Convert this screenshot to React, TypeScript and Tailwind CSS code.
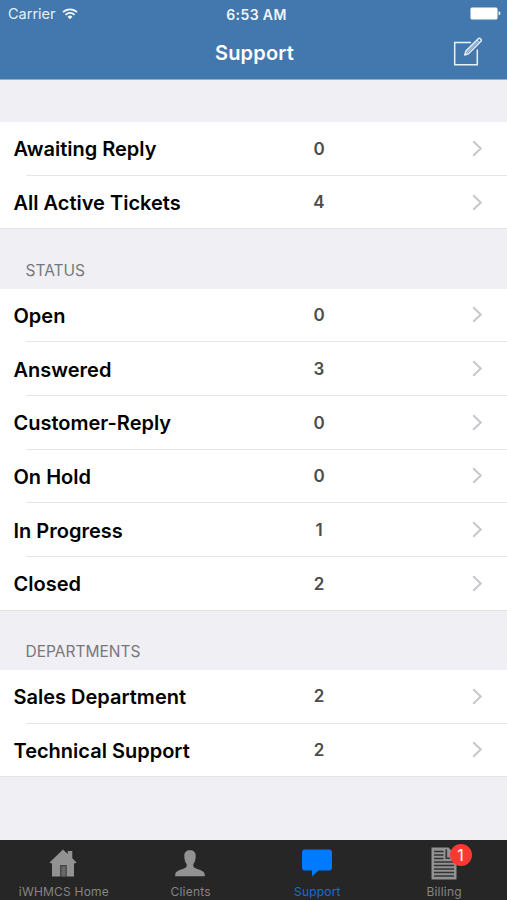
import React from 'react';

interface Row {
  label: string;
  count: number;
}

interface Section {
  title?: string;
  rows: Row[];
}

const sections: Section[] = [
  {
    rows: [
      { label: 'Awaiting Reply', count: 0 },
      { label: 'All Active Tickets', count: 4 },
    ],
  },
  {
    title: 'STATUS',
    rows: [
      { label: 'Open', count: 0 },
      { label: 'Answered', count: 3 },
      { label: 'Customer-Reply', count: 0 },
      { label: 'On Hold', count: 0 },
      { label: 'In Progress', count: 1 },
      { label: 'Closed', count: 2 },
    ],
  },
  {
    title: 'DEPARTMENTS',
    rows: [
      { label: 'Sales Department', count: 2 },
      { label: 'Technical Support', count: 2 },
    ],
  },
];

const WifiIcon = () => (
  <svg width="16" height="12" viewBox="0 0 16 12" fill="none" stroke="#f2f7fb" strokeWidth="1.8">
    <path d="M1 4.2a10 10 0 0 1 14 0" />
    <path d="M3.5 6.8a6.4 6.4 0 0 1 9 0" />
    <path d="M8 11.2 5.6 8.8a3.4 3.4 0 0 1 4.8 0z" fill="#f2f7fb" stroke="none" />
  </svg>
);

const BatteryIcon = () => (
  <svg width="31" height="13" viewBox="0 0 31 13" fill="#fff">
    <rect x="0.5" y="0.5" width="27" height="12" rx="1.5" />
    <path d="M28.6 4.3c1.2.3 1.8 1 1.8 2s-.6 1.7-1.8 2z" />
  </svg>
);

const ComposeIcon = () => (
  <svg width="30" height="30" viewBox="0 0 30 30" fill="none" stroke="#e6f1fa" strokeWidth="1.5">
    <path d="M18 5.5H1.7v22.300h22.600V12.500" />
    <path d="M11.8 18 12.900 14.100 25.300 1.700Q26.400.8 27.500 1.800Q28.900 3 27.900 4.200L15.400 16.800z" strokeLinejoin="round" />
    <path d="m13.2 16.4 12-12.1M24 3.100l2.500 2.500" strokeWidth="1" />
  </svg>
);

const HomeIcon = () => (
  <svg width="28" height="28" viewBox="0 0 28 28" fill="#929292">
    <path d="M14 .5 18.7 5V2h4.600v7.300L27.500 13.400 26.500 14.300H25V27.500H17.500V16H11V27.500H3V14.300H1.500L.5 13.400z" />
    <path d="M11 16h6.500v11.500H11z" fill="#484848" />
    <path d="M12.500 17.500h4v10h-4z" fill="#686868" />
  </svg>
);

const ClientsIcon = () => (
  <svg width="30" height="27" viewBox="0 0 30 27" fill="#929292">
    <path d="M15 .3c-3.500 0-5.700 2-5.700 5.400 0 3.500.8 6.500 2.300 8.300.6 2.500-.3 3.600-2.600 4.400C3.500 20.400.2 21.200.2 25v1.300h29.600V25c0-3.800-3.300-4.600-8.800-6.600-2.300-.8-3.200-1.900-2.600-4.400 1.500-1.800 2.300-4.800 2.300-8.300C20.700 2.300 18.500.3 15 .3z" />
  </svg>
);

const SupportIcon = () => (
  <svg width="30" height="28" viewBox="0 0 30 28" fill="#007aff">
    <path d="M3 .5h24a3 3 0 0 1 3 3v15a3 3 0 0 1-3 3H16.500L10 27.500v-6H3a3 3 0 0 1-3-3v-15a3 3 0 0 1 3-3z" />
  </svg>
);

const BillingIcon = () => (
  <svg width="26" height="33" viewBox="0 0 26 33">
    <path d="M.5.5h17L25.500 9v23.500H.5z" fill="#929292" />
    <path d="M3 4.500h9.500M3 8h9.500M3 11.500h9.500M3 15h20M3 18.500h20M3 22h20M3 25.500h20M3 29h20" stroke="#333" strokeWidth="1.400" />
    <path d="M15.300 2.500v8.700H19" fill="none" stroke="#333" strokeWidth="1.600" />
  </svg>
);

const Chevron = () => (
  <svg width="11" height="17" viewBox="0 0 11 17" fill="none" stroke="#c7c7cc" strokeWidth="2">
    <path d="m1.200 1.200 7.600 7.300-7.600 7.300" />
  </svg>
);

const TicketRow: React.FC<{ row: Row; last: boolean }> = ({ row, last }) => (
  <button className="block h-[53.7px] w-full bg-white text-left">
    <div className="flex h-[52.7px] items-center">
      <span className="w-[299px] pt-[2px] pl-[13.5px] text-[20px] font-semibold text-black">{row.label}</span>
      <span className="w-10 pt-[2px] text-center text-[17px] font-semibold text-[#4c4c4c]">{row.count}</span>
      <span className="ml-auto pr-[24px]">
        <Chevron />
      </span>
    </div>
    <div className={last ? 'h-px bg-[#e3e3e6]' : 'ml-[26px] h-px bg-[#e6e6e8]'} />
  </button>
);

const tabs = [
  { label: 'iWHMCS Home', icon: <HomeIcon /> },
  { label: 'Clients', icon: <ClientsIcon /> },
  { label: 'Support', icon: <SupportIcon />, active: true },
  { label: 'Billing', icon: <BillingIcon />, badge: 1 },
];

const App: React.FC = () => {
  return (
    <div className="flex h-[900px] w-[507px] flex-col overflow-hidden bg-[#efeff4] font-['Inter','Liberation_Sans',sans-serif]">
      <header className="h-[79.5px] shrink-0 border-b border-[#8eafd0] bg-[#4378ae] text-white">
        <div className="grid h-[27px] grid-cols-3 items-center pr-[6px] pl-[8px] text-[14px]">
          <div className="flex items-center gap-[6px] text-[14.5px] text-[#e6f0f8]">
            <span>Carrier</span>
            <WifiIcon />
          </div>
          <span className="pt-px pl-[4px] text-center font-semibold tracking-[0.4px] whitespace-nowrap text-[#eef5fa]">6:53 AM</span>
          <div className="flex justify-end">
            <BatteryIcon />
          </div>
        </div>
        <div className="grid h-[50px] grid-cols-[1fr_auto_1fr] items-center pr-[24px] pl-[26px]">
          <span />
          <h1 className="pt-px text-[20px] font-semibold tracking-[0.2px]">Support</h1>
          <button className="justify-self-end">
            <ComposeIcon />
          </button>
        </div>
      </header>

      <main className="flex-1">
        {sections.map((section, i) => (
          <section key={i}>
            <div className={section.title ? 'flex h-[59.2px] items-end pb-[6.5px] pl-[25.5px]' : 'h-[42.5px]'}>
              {section.title && <h2 className="text-[15.5px] text-[#77777c]">{section.title}</h2>}
            </div>
            {section.rows.map((row, j) => (
              <TicketRow key={row.label} row={row} last={j === section.rows.length - 1} />
            ))}
          </section>
        ))}
      </main>

      <nav className="grid h-[60px] shrink-0 grid-cols-4 bg-[#262626]">
        {tabs.map(tab => (
          <button key={tab.label} className="flex flex-col items-center">
            <span className="relative flex h-[44px] items-center pt-[2px]">
              {tab.icon}
              {tab.badge && (
                <span className="absolute top-[4px] -right-[15px] flex size-[22px] items-center justify-center rounded-full bg-[#fc3931] text-[16px] text-white">
                  {tab.badge}
                </span>
              )}
            </span>
            <span className={`pl-px text-[12px] leading-[15px] tracking-[0.2px] ${tab.active ? 'text-[#1270d8]' : 'text-[#858585]'}`}>
              {tab.label}
            </span>
          </button>
        ))}
      </nav>
    </div>
  );
};

export default App;
